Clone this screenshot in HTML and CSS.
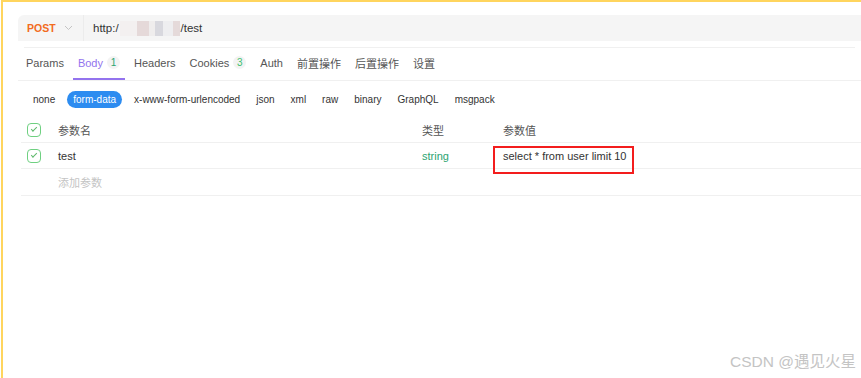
FILE: index.html
```html
<!DOCTYPE html>
<html lang="zh-CN">
<head>
    <meta charset="UTF-8">
    <title>接口调试</title>
    <link rel="stylesheet" href="styles.css">
</head>
<body>
    <div class="frame">
        <div class="panel">
            <div class="url-bar">
                <div class="method">
                    <span class="method-name">POST</span>
                    <svg class="chevron" width="9" height="6" viewBox="0 0 9 6"><path d="M1 1l3.5 3.5L8 1" fill="none" stroke="#c4c4c4" stroke-width="1"/></svg>
                </div>
                <div class="url">
                    <span>http:/</span>
                    <span class="masked">
                        <i class="m1"></i><i class="m2"></i><i class="m3"></i><i class="m4"></i><i class="m5"></i><i class="m6"></i>
                    </span>
                    <span>/test</span>
                </div>
            </div>

            <div class="tabs">
                <div class="tab">Params</div>
                <div class="tab active">Body <span class="badge">1</span></div>
                <div class="tab">Headers</div>
                <div class="tab">Cookies <span class="badge green">3</span></div>
                <div class="tab">Auth</div>
                <div class="tab">前置操作</div>
                <div class="tab">后置操作</div>
                <div class="tab">设置</div>
            </div>

            <div class="body-types">
                <span>none</span>
                <span class="selected">form-data</span>
                <span>x-www-form-urlencoded</span>
                <span>json</span>
                <span>xml</span>
                <span>raw</span>
                <span>binary</span>
                <span>GraphQL</span>
                <span>msgpack</span>
            </div>

            <div class="params">
                <div class="row head">
                    <div class="cell check"><span class="checkbox"></span></div>
                    <div class="cell name">参数名</div>
                    <div class="cell type">类型</div>
                    <div class="cell value">参数值</div>
                </div>
                <div class="row">
                    <div class="cell check"><span class="checkbox"></span></div>
                    <div class="cell name">test</div>
                    <div class="cell type string">string</div>
                    <div class="cell value"><span class="highlight">select * from user limit 10</span></div>
                </div>
                <div class="row">
                    <div class="cell check"></div>
                    <div class="cell name placeholder">添加参数</div>
                    <div class="cell type"></div>
                    <div class="cell value"></div>
                </div>
            </div>
        </div>
        <div class="watermark">CSDN @遇见火星</div>
    </div>
</body>
</html>
```

FILE: styles.css
```css
:root {
    --yellow: #ffd55e;
    --line: #f0f0f0;
    --text: #333;
    --muted: #555;
    --purple: #9373ee;
    --blue: #2d8cf0;
}

body {
    margin: 0;
    font-family: 'Liberation Sans', 'Noto Sans CJK SC', sans-serif;
    font-size: 11px;
    color: var(--text);
    background: #fff;
}

.frame {
    position: relative;
    margin-left: 1px;
    height: 376px;
    border-top: 2px solid var(--yellow);
    border-left: 2px solid var(--yellow);
    overflow: hidden;
}

.panel {
    padding: 13px 0 0 15px;
}

.url-bar {
    display: flex;
    align-items: center;
    height: 26px;
    background: #f5f5f5;
    border-radius: 6px 0 0 6px;
    border-bottom: 6px solid #fff;
    box-shadow: 0 7px 0 -6px var(--line);
}

.method {
    display: flex;
    align-items: center;
    width: 56px;
    height: 100%;
    padding-left: 9px;
    border-right: 1px solid #ececec;
}

.method-name {
    color: #f26b21;
    font-weight: bold;
    font-size: 10.5px;
}

.chevron {
    margin-left: 8px;
}

.url {
    display: flex;
    align-items: center;
    padding-left: 9px;
    font-size: 11.5px;
    color: #333;
}

.masked {
    display: flex;
    height: 15px;
    margin: 0 1px;
}

.masked i {
    display: block;
    height: 100%;
}

.m1 { width: 17px; background: #f3f0f0; }
.m2 { width: 12px; background: #e5d9d9; }
.m3 { width: 6px; background: #efeded; }
.m4 { width: 8px; background: #d8d8de; }
.m5 { width: 10px; background: #eeeef0; }
.m6 { width: 7px; background: #e5dada; }

.tabs {
    display: flex;
    gap: 4px;
    height: 33px;
    padding-left: 3px;
    border-bottom: 1px solid var(--line);
}

.tab {
    display: flex;
    align-items: center;
    padding: 0 5px;
    font-size: 11px;
    color: var(--muted);
    border-bottom: 2px solid transparent;
}

.tab.active {
    color: var(--purple);
    border-bottom-color: var(--purple);
}

.badge {
    display: inline-flex;
    align-items: center;
    justify-content: center;
    width: 13px;
    height: 13px;
    margin-left: 4px;
    border-radius: 50%;
    background: #f3f3f3;
    color: #2ba471;
    font-size: 10px;
}

.badge.green {
    color: #3ec06e;
}

.body-types {
    display: flex;
    align-items: center;
    gap: 16px;
    height: 36px;
    padding-left: 15px;
}

.body-types span {
    font-size: 10px;
    color: #333;
    padding: 2px 0;
}

.body-types .selected {
    background: var(--blue);
    color: #fff;
    border-radius: 9px;
    padding: 3px 6px;
    margin: 0 -4px;
}

.row {
    display: flex;
    align-items: center;
    height: 25px;
    margin-left: 3px;
    border-bottom: 1px solid var(--line);
}

.row:last-child {
    height: 26px;
}

.cell {
    font-size: 11px;
}

.check {
    width: 31px;
    padding-left: 6px;
    display: flex;
}

.name {
    width: 364px;
}

.type {
    width: 81px;
}

.head .cell {
    color: #555;
}

.string {
    color: #2ba471;
}

.placeholder {
    color: #c4c4c4;
}

.checkbox {
    position: relative;
    display: block;
    width: 12px;
    height: 12px;
    border: 1px solid #6fd081;
    border-radius: 4px;
}

.checkbox::after {
    content: "";
    position: absolute;
    left: 3px;
    top: 3px;
    width: 5px;
    height: 2px;
    border-left: 1px solid #5cb86a;
    border-bottom: 1px solid #5cb86a;
    transform: rotate(-45deg);
}

.highlight {
    position: relative;
}

.highlight::after {
    content: "";
    position: absolute;
    left: -10px;
    right: -8px;
    top: -4px;
    bottom: -12px;
    border: 2px solid #f31d1d;
}

.watermark {
    position: absolute;
    right: 5px;
    bottom: 7px;
    font-size: 15.5px;
    color: #c4c4c4;
}
```
